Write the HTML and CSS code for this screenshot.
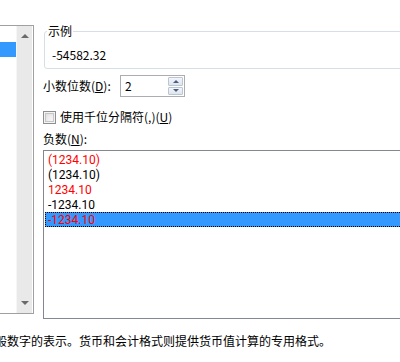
FILE: index.html
```html
<!DOCTYPE html>
<html lang="zh">
<head>
<meta charset="utf-8">
<title>数字格式</title>
<link rel="stylesheet" href="styles.css">
</head>
<body>
<div class="dialog">
  <div class="top">
    <div class="cat-list">
      <div class="cat-items"><div class="cat-sel"></div></div>
      <div class="vscroll">
        <span class="arrow arrow-up"></span>
        <span class="arrow arrow-down"></span>
      </div>
    </div>
    <div class="right">
      <div class="group">
        <span class="group-title">示例</span>
        <div class="sample">-54582.32</div>
      </div>
      <div class="spin-row">
        <label class="lbl">小数位数(<u>D</u>):</label>
        <div class="spin">
          <span class="spin-val">2</span>
          <div class="spin-btns">
            <span class="sb up"></span>
            <span class="sb down"></span>
          </div>
        </div>
      </div>
      <div class="check-row">
        <span class="checkbox"></span>
        <span class="check-text">使用千位分隔符(,)(<u>U</u>)</span>
      </div>
      <div class="neg-label">负数(<u>N</u>):</div>
      <div class="neg-list">
        <div class="item red">(1234.10)</div>
        <div class="item">(1234.10)</div>
        <div class="item red">1234.10</div>
        <div class="item">-1234.10</div>
        <div class="item red sel">-1234.10</div>
      </div>
    </div>
  </div>
  <div class="desc">般数字的表示。货币和会计格式则提供货币值计算的专用格式。</div>
</div>
</body>
</html>
```

FILE: styles.css
```css
html, body {
  margin: 0;
  padding: 0;
  background: #ffffff;
}

.dialog {
  width: 400px;
  height: 362px;
  overflow: hidden;
  font-family: "Noto Sans CJK SC", "Liberation Sans", sans-serif;
  font-size: 12px;
  color: #000000;
}

.top {
  display: flex;
  align-items: flex-start;
}

/* left category list (mostly clipped) */
.cat-list {
  flex-shrink: 0;
  margin-top: 25px;
  width: 33px;
  height: 287px;
  border: 1px solid #a0a0a0;
  border-left: none;
  display: flex;
}

.cat-items {
  width: 16px;
}

.cat-sel {
  margin-top: 16px;
  height: 15px;
  background: #3399ff;
}

.vscroll {
  width: 16px;
  border-left: 1px solid #f6f6f6;
  background: #e9e9e9;
  display: flex;
  flex-direction: column;
  justify-content: space-between;
  align-items: center;
  padding: 8px 0 8px 0;
  box-sizing: border-box;
}

.arrow {
  width: 0;
  height: 0;
  border-left: 4px solid transparent;
  border-right: 4px solid transparent;
}

.arrow-up {
  border-bottom: 4px solid #6a6a6a;
}

.arrow-down {
  border-top: 4px solid #6a6a6a;
}

/* right column */
.right {
  flex-shrink: 0;
  width: 420px;
  margin-left: 9px;
}

.group {
  position: relative;
  margin-top: 31px;
  margin-left: 1px;
  border: 1px solid #d5dfe5;
  border-radius: 3px;
  padding: 15px 0 5px 7px;
}

.group-title {
  position: absolute;
  top: -8px;
  left: 2px;
  padding: 0 1px;
  background: #ffffff;
  line-height: 14px;
}

.sample {
  line-height: 16px;
}

.spin-row {
  display: flex;
  align-items: center;
  height: 22px;
  margin-top: 6px;
}

.lbl {
  width: 77px;
  line-height: 16px;
}

.spin {
  width: 63px;
  height: 20px;
  border: 1px solid #abadb3;
  display: flex;
}

.spin-val {
  flex: 1;
  padding-left: 4px;
  line-height: 20px;
}

.spin-btns {
  width: 15px;
  padding: 1px 1px 1px 0;
  display: flex;
  flex-direction: column;
  gap: 1px;
}

.sb {
  flex: 1;
  box-sizing: border-box;
  border: 1px solid #bcc6d2;
  border-radius: 1px;
  background: linear-gradient(#f3f6fa, #dde5ee);
  display: flex;
  align-items: center;
  justify-content: center;
}

.sb::after {
  content: "";
  width: 0;
  height: 0;
  border-left: 3px solid transparent;
  border-right: 3px solid transparent;
}

.sb.up::after {
  border-bottom: 3px solid #4c5f83;
}

.sb.down::after {
  border-top: 3px solid #4c5f83;
}

.check-row {
  display: flex;
  align-items: center;
  height: 14px;
  margin-top: 13px;
}

.checkbox {
  width: 13px;
  height: 13px;
  box-sizing: border-box;
  border: 1px solid #8e8f8f;
  background: #f4f4f4;
  box-shadow: inset 0 0 0 1px #f4f4f4, inset 0 0 0 2px #c6c6c6, inset 2px 2px 5px #d8d8d8;
}

.check-text {
  margin-left: 4px;
  line-height: 14px;
}

.neg-label {
  margin-top: 7px;
  line-height: 16px;
}

.neg-list {
  margin-top: 3px;
  box-sizing: border-box;
  height: 169px;
  border: 1px solid #828790;
  padding: 1px 0 0 1px;
}

.item {
  box-sizing: border-box;
  height: 15px;
  padding: 1px 0 0 3px;
  line-height: 14px;
  font-family: Roboto, "Liberation Sans", sans-serif;
}

.item.red {
  color: #ff0000;
}

.item.sel {
  background: #3399ff;
  outline: 1px dotted #000000;
  outline-offset: -1px;
}

.desc {
  margin-top: 14px;
  margin-left: -5px;
  white-space: nowrap;
  line-height: 16px;
}
```
